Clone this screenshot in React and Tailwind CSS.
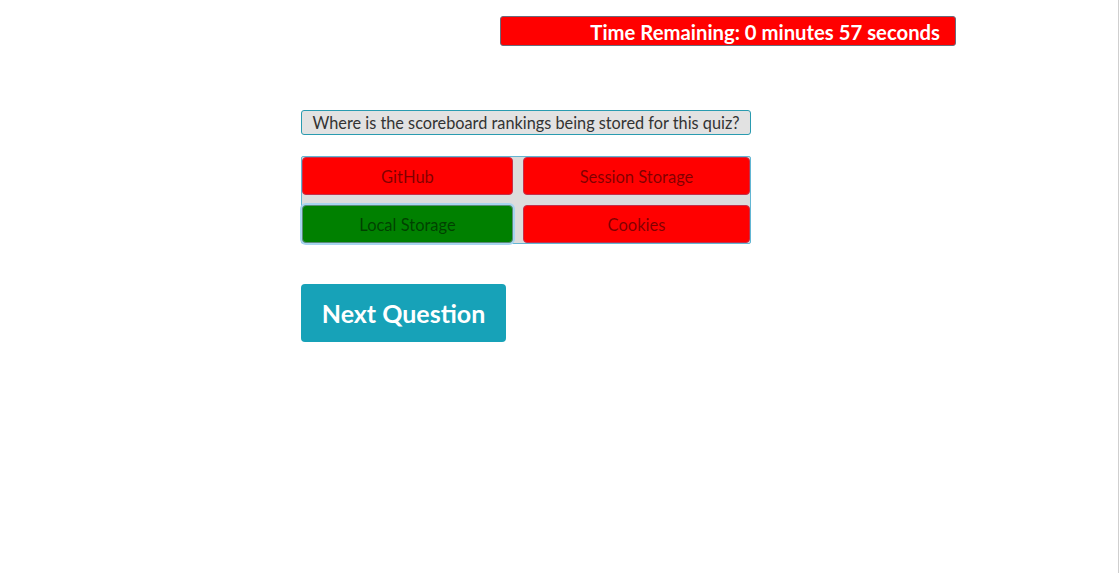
export default function App() {
  return (
    <div className="w-[1119px] h-[573px] bg-white border-r border-[#cfcfcf] overflow-hidden font-['Lato',_'Open_Sans',_sans-serif]">
      <div className="pt-[16px] pl-[500px]">
        <div className="w-[456px] h-[30px] pt-[2px] bg-[#ff0000] border border-[#6b6b7b] rounded-[3px] flex items-center justify-end pr-[15px] text-white font-bold text-[20.3px] leading-none">
          Time Remaining: 0 minutes 57 seconds
        </div>
      </div>
      <div className="pl-[301px] pt-[64px]">
        <div className="w-[450px] h-[25px] pt-[2px] bg-[#e2e2e2] border border-[#2a9bb0] rounded-[3px] flex items-center justify-center text-[16.3px] leading-none text-[#333]">
          Where is the scoreboard rankings being stored for this quiz?
        </div>
        <div className="mt-[21px] w-[450px] h-[88px] bg-[#dcdcdc] border border-[#62b6d3] rounded-[2px] grid grid-cols-[211px_227px] grid-rows-[38px_38px] gap-[10px]">
          <button className="pt-[2px] bg-[#ff0000] rounded-[4px] border border-[#c4304a] text-[16.5px] text-black/50">GitHub</button>
          <button className="pt-[2px] bg-[#ff0000] rounded-[4px] border border-[#c4304a] text-[16.5px] text-black/50">Session Storage</button>
          <button className="pt-[2px] bg-[#008000] rounded-[4px] border border-[#5c8a7a] text-[16.5px] text-black/50 ring-2 ring-[#a8d4f0]">Local Storage</button>
          <button className="pt-[2px] bg-[#ff0000] rounded-[4px] border border-[#c4304a] text-[16.5px] text-black/50">Cookies</button>
        </div>
        <button className="mt-[40px] w-[205px] h-[58px] pt-[2px] bg-[#17a2b8] rounded-[4px] text-white font-bold text-[25px]">
          Next Question
        </button>
      </div>
    </div>
  );
}
